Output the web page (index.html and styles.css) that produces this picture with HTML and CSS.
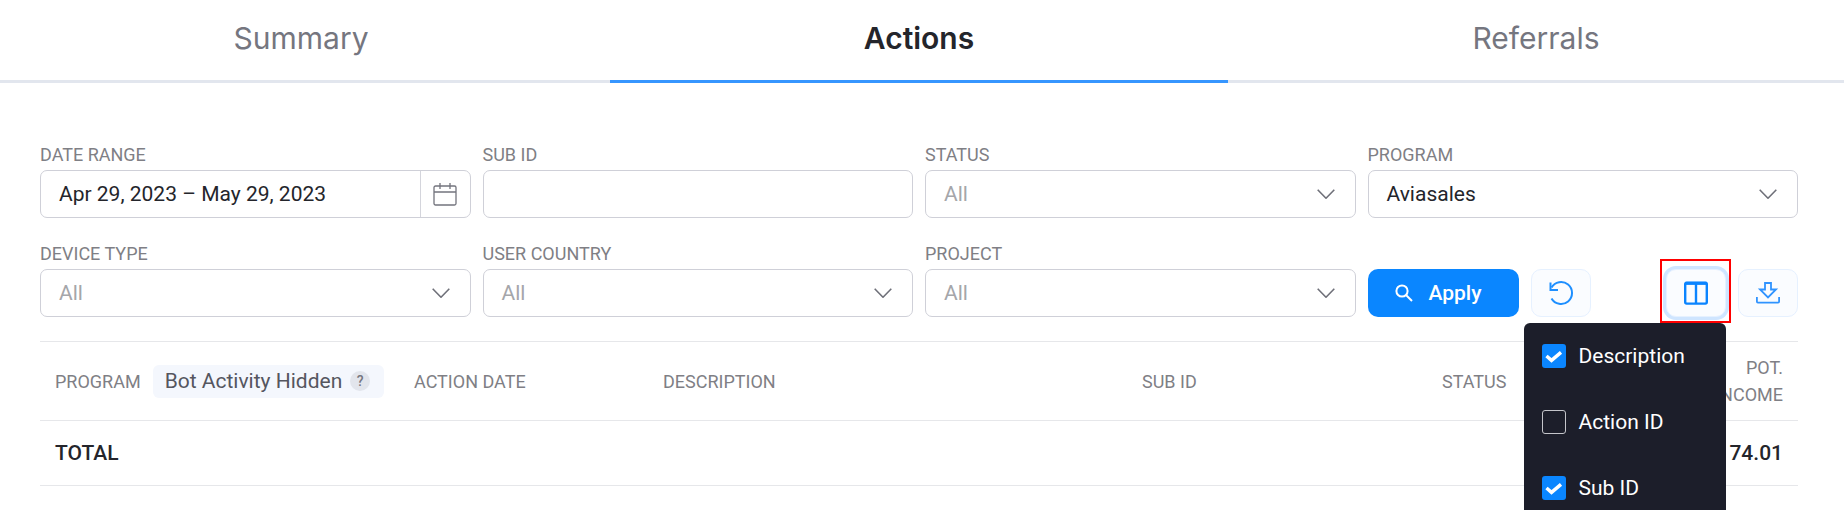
FILE: index.html
```html
<!DOCTYPE html>
<html lang="en">
<head>
<meta charset="utf-8">
<title>Actions</title>
<link rel="stylesheet" href="styles.css">
</head>
<body>
<nav class="tabs">
  <a class="tab tab-first">Summary</a>
  <a class="tab tab-active">Actions</a>
  <a class="tab">Referrals</a>
</nav>
<main class="content">
  <section class="filters">
    <div class="field">
      <label class="label">DATE RANGE</label>
      <div class="control date">
        <span class="value date-value">Apr 29, 2023 – May 29, 2023</span>
        <span class="date-btn">
          <svg width="24" height="24" viewBox="0 0 24 24" fill="none" stroke="#73747d" stroke-width="1.3"><rect x="1" y="4" width="22" height="19" rx="1.5"/><path d="M1 10h22M7 1v6M17 1v6"/></svg>
        </span>
      </div>
    </div>
    <div class="field">
      <label class="label">SUB ID</label>
      <div class="control"></div>
    </div>
    <div class="field">
      <label class="label">STATUS</label>
      <div class="control select"><span class="value placeholder">All</span><svg class="chev" width="18" height="10" viewBox="0 0 18 10" fill="none" stroke="#6f7079" stroke-width="1.6"><path d="M.7.7 9 9.2 17.3.7"/></svg></div>
    </div>
    <div class="field">
      <label class="label">PROGRAM</label>
      <div class="control select"><span class="value">Aviasales</span><svg class="chev" width="18" height="10" viewBox="0 0 18 10" fill="none" stroke="#6f7079" stroke-width="1.6"><path d="M.7.7 9 9.2 17.3.7"/></svg></div>
    </div>
    <div class="field">
      <label class="label">DEVICE TYPE</label>
      <div class="control select"><span class="value placeholder">All</span><svg class="chev" width="18" height="10" viewBox="0 0 18 10" fill="none" stroke="#6f7079" stroke-width="1.6"><path d="M.7.7 9 9.2 17.3.7"/></svg></div>
    </div>
    <div class="field">
      <label class="label">USER COUNTRY</label>
      <div class="control select"><span class="value placeholder">All</span><svg class="chev" width="18" height="10" viewBox="0 0 18 10" fill="none" stroke="#6f7079" stroke-width="1.6"><path d="M.7.7 9 9.2 17.3.7"/></svg></div>
    </div>
    <div class="field">
      <label class="label">PROJECT</label>
      <div class="control select"><span class="value placeholder">All</span><svg class="chev" width="18" height="10" viewBox="0 0 18 10" fill="none" stroke="#6f7079" stroke-width="1.6"><path d="M.7.7 9 9.2 17.3.7"/></svg></div>
    </div>
    <div class="actions">
      <button class="apply">
        <svg width="18" height="18" viewBox="0 0 18 18" fill="none" stroke="#fff" stroke-width="2"><circle cx="7" cy="7" r="5.6"/><path d="m11 11 6 6"/></svg>
        <span>Apply</span>
      </button>
      <button class="icon-btn">
        <svg width="26" height="26" viewBox="0 0 26 26" fill="none" stroke="#1e8fff" stroke-width="2"><path d="M3.5 7.5A11 11 0 1 1 3.5 18.5"/><path d="M2.5 2.5v7.5h7.5"/></svg>
      </button>
      <div class="columns">
        <button class="icon-btn icon-btn-open">
          <svg width="24" height="24" viewBox="0 0 24 24" fill="none" stroke="#0a84ff" stroke-width="2.4"><rect x="1.2" y="1.6" width="21.6" height="21" rx="1.5"/><path d="M12 2v20"/><path d="M1 2.4h22" stroke-width="3"/></svg>
        </button>
        <span class="highlight"></span>
        <div class="menu">
          <div class="menu-item"><span class="check check-on"><svg width="24" height="24" viewBox="0 0 24 24" fill="none" stroke="#fff" stroke-width="3.4"><path d="m4.5 12 5 4.4 9.5-8"/></svg></span>Description</div>
          <div class="menu-item"><span class="check"></span>Action ID</div>
          <div class="menu-item"><span class="check check-on"><svg width="24" height="24" viewBox="0 0 24 24" fill="none" stroke="#fff" stroke-width="3.4"><path d="m4.5 12 5 4.4 9.5-8"/></svg></span>Sub ID</div>
        </div>
      </div>
      <button class="icon-btn">
        <svg width="24" height="22" viewBox="0 0 24 22" fill="none" stroke="#2f93ff" stroke-width="1.8"><path d="M.9 15v4.6a1 1 0 0 0 1 1h20.2a1 1 0 0 0 1-1V15"/><path d="M9 1h6v6.5h5l-8 8-8-8h5z"/></svg>
      </button>
    </div>
  </section>
  <section class="table">
    <div class="row row-head">
      <div class="cell cell-program">PROGRAM <span class="chip">Bot Activity Hidden<span class="hint">?</span></span></div>
      <div class="cell">ACTION DATE</div>
      <div class="cell">DESCRIPTION</div>
      <div class="cell">SUB ID</div>
      <div class="cell">STATUS</div>
      <div class="cell cell-right">POT.<br>INCOME</div>
    </div>
    <div class="row row-total">
      <div class="cell">TOTAL</div>
      <div class="cell"></div>
      <div class="cell"></div>
      <div class="cell"></div>
      <div class="cell"></div>
      <div class="cell cell-right">$ 74.01</div>
    </div>
  </section>
</main>
</body>
</html>
```
FILE: styles.css
```css
html, body {
  margin: 0;
  height: 510px;
  overflow: hidden;
  background: #fff;
}
body {
  font-family: "Roboto", "Liberation Sans", sans-serif;
  color: #24252b;
}
.tabs {
  display: grid;
  grid-template-columns: 610px 618px 1fr;
  height: 83px;
  box-sizing: border-box;
  border-bottom: 3px solid #e2e6ee;
}
.tab {
  display: flex;
  align-items: center;
  justify-content: center;
  height: 83px;
  box-sizing: border-box;
  padding-bottom: 8px;
  font-family: "Inter", sans-serif;
  font-size: 30px;
  color: #75767f;
}
.tab-first { padding-right: 8px; }
.tab-active {
  padding-bottom: 5px;
  border-bottom: 3px solid #3696ff;
  color: #24252b;
  font-weight: 600;
}
.content { padding: 59px 46px 0 40px; }
.filters {
  display: grid;
  grid-template-columns: repeat(4, 1fr);
  column-gap: 12px;
  row-gap: 23px;
}
.label {
  display: block;
  height: 24px;
  margin-bottom: 4px;
  font-size: 18px;
  line-height: 25px;
  color: #7f7f85;
}
.control {
  display: flex;
  align-items: center;
  justify-content: space-between;
  box-sizing: border-box;
  height: 48px;
  padding: 0 20px 0 18px;
  border: 1px solid #cfd0d8;
  border-radius: 7px;
  background: #fff;
}
.value { font-size: 21px; color: #24252b; }
.placeholder { color: #a5a6aa; }
.date { padding-right: 0; }
.date-btn {
  display: flex;
  align-items: center;
  justify-content: center;
  width: 49px;
  height: 46px;
  border-left: 1px solid #d4d5dc;
}
.actions {
  display: flex;
  gap: 12px;
  align-self: end;
}
.apply {
  display: flex;
  align-items: center;
  justify-content: center;
  gap: 16px;
  box-sizing: border-box;
  width: 151px;
  height: 48px;
  padding: 0 10px 0 0;
  border: 0;
  border-radius: 10px;
  background: #0a86ff;
  color: #fff;
  font: 500 21px "Roboto", sans-serif;
}
.icon-btn {
  display: flex;
  align-items: center;
  justify-content: center;
  box-sizing: border-box;
  width: 60px;
  height: 48px;
  padding: 0;
  border: 1px solid #e6f1ff;
  border-radius: 10px;
  background: #fafcff;
}
.icon-btn-open { box-shadow: 0 0 0 3px #cfe5ff; }
.columns {
  position: relative;
  margin-left: 63px;
}
.highlight {
  position: absolute;
  left: -6px;
  right: -5px;
  top: -10px;
  bottom: -6px;
  border: 2px solid #f00;
  pointer-events: none;
}
.menu {
  position: absolute;
  top: 54px;
  right: 0;
  width: 202px;
  border-radius: 6px;
  background: #1c1e2a;
  z-index: 2;
}
.menu-item {
  display: flex;
  align-items: center;
  gap: 13px;
  height: 66px;
  padding-left: 18px;
  font-size: 21px;
  color: #fff;
}
.check {
  box-sizing: border-box;
  width: 24px;
  height: 24px;
  border: 1px solid #c4c5ca;
  border-radius: 3px;
}
.check-on {
  border: 0;
  background: #0a86ff;
}
.check svg { display: block; }
.table {
  margin-top: 24px;
  border-top: 1px solid #e6e7ea;
}
.row {
  display: grid;
  grid-template-columns: 359px 249px 479px 300px 1fr 160px;
  align-items: center;
  box-sizing: border-box;
  border-bottom: 1px solid #e6e7ea;
}
.row-head {
  height: 79px;
  font-size: 18px;
  line-height: 27px;
  color: #7f7f85;
}
.row-total {
  height: 65px;
  font-size: 21px;
  font-weight: 500;
  color: #24252b;
}
.cell { padding: 0 15px; }
.cell-program {
  display: flex;
  align-items: center;
  gap: 12px;
  padding-right: 0;
}
.cell-right { text-align: right; }
.chip {
  display: inline-flex;
  flex: none;
  align-items: center;
  gap: 8px;
  height: 33px;
  padding: 0 14px 0 12px;
  border-radius: 6px;
  background: #f4f7fd;
  font-size: 21px;
  white-space: nowrap;
  color: #55565f;
}
.hint {
  width: 20px;
  height: 20px;
  border-radius: 50%;
  background: #e2e5ec;
  font-size: 14px;
  font-weight: 500;
  line-height: 20px;
  text-align: center;
  color: #75767f;
}
```
